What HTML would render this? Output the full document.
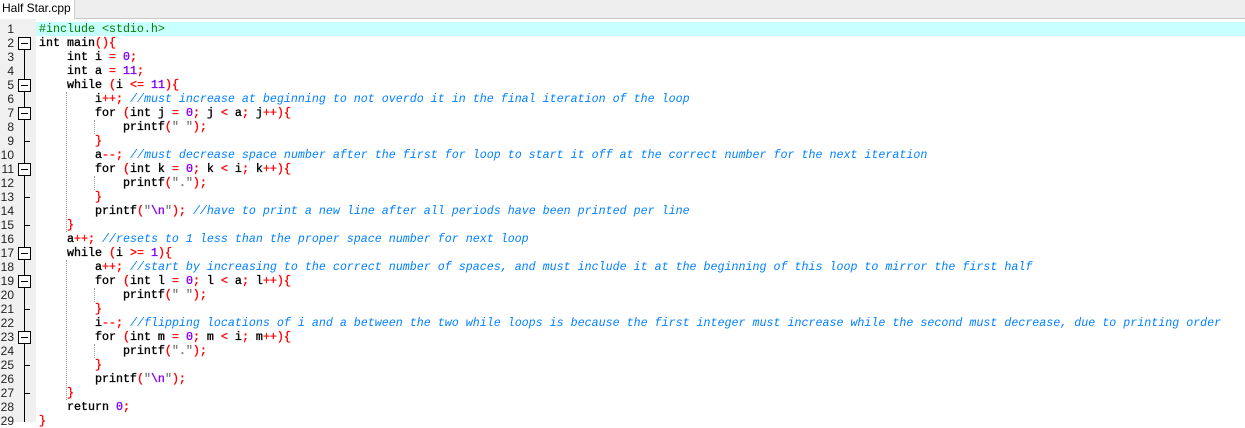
<!DOCTYPE html>
<html><head><meta charset="utf-8"><style>
html,body{margin:0;padding:0;}
body{width:1245px;height:422px;overflow:hidden;background:#fff;position:relative;font-family:"Liberation Mono",monospace;}
.tabbar{position:absolute;left:0;top:0;width:1245px;height:18px;background:#eeeeee;border-bottom:1px solid #c8c8c8;}
.tab{position:absolute;left:0;top:0;width:75px;height:19px;background:#fff;border-right:1px solid #d0d0d0;font-family:"Liberation Sans",sans-serif;font-size:12px;line-height:17px;padding-left:2px;box-sizing:border-box;color:#000;}
.gutter{position:absolute;left:0;top:19px;width:36px;height:403px;background:#f0f0f0;}
.hl{position:absolute;left:36px;top:22px;width:1209px;height:14px;background:#c8ffff;}
.ln{position:absolute;left:0;width:14px;text-align:right;font-family:"Liberation Sans",sans-serif;font-size:12px;line-height:14px;color:#222;}
.code{position:absolute;left:39px;white-space:pre;font-size:11.67px;line-height:14px;font-weight:normal;-webkit-text-stroke:0.35px currentColor;color:#000;}
.o{color:#ff0000}
.n{color:#8000ff}
.s{color:#808080}
.p{color:#008000;-webkit-text-stroke:0}
.c{color:#0080ff;font-style:italic;-webkit-text-stroke:0}
.vl{position:absolute;left:24px;width:1px;background:#000;}
.box{position:absolute;left:18px;width:11px;height:11px;border:1px solid #000;background:#fff;}
.box:after{content:"";position:absolute;left:2px;top:5px;width:7px;height:1px;background:#000;}
.tick{position:absolute;left:24px;width:6px;height:1px;background:#000;}
.g{position:absolute;width:0;border-left:1px dotted #999;}
</style></head><body>
<div class="tabbar"></div>
<div class="tab">Half Star.cpp</div>
<div class="gutter"></div>
<div class="hl"></div>

<div class="vl" style="top:44px;height:378px"></div>

<div class="box" style="top:37px"></div>
<div class="box" style="top:79px"></div>
<div class="box" style="top:107px"></div>
<div class="box" style="top:163px"></div>
<div class="box" style="top:247px"></div>
<div class="box" style="top:275px"></div>
<div class="box" style="top:331px"></div>
<div class="tick" style="top:141px"></div>
<div class="tick" style="top:197px"></div>
<div class="tick" style="top:225px"></div>
<div class="tick" style="top:309px"></div>
<div class="tick" style="top:365px"></div>
<div class="tick" style="top:393px"></div>

<div class="g" style="left:66px;top:92px;height:140px"></div>
<div class="g" style="left:66px;top:260px;height:140px"></div>
<div class="g" style="left:94px;top:120px;height:14px"></div>
<div class="g" style="left:94px;top:176px;height:14px"></div>
<div class="g" style="left:94px;top:288px;height:14px"></div>
<div class="g" style="left:94px;top:344px;height:14px"></div>

<div class="ln" style="top:22px">1</div>
<div class="ln" style="top:36px">2</div>
<div class="ln" style="top:50px">3</div>
<div class="ln" style="top:64px">4</div>
<div class="ln" style="top:78px">5</div>
<div class="ln" style="top:92px">6</div>
<div class="ln" style="top:106px">7</div>
<div class="ln" style="top:120px">8</div>
<div class="ln" style="top:134px">9</div>
<div class="ln" style="top:148px">10</div>
<div class="ln" style="top:162px">11</div>
<div class="ln" style="top:176px">12</div>
<div class="ln" style="top:190px">13</div>
<div class="ln" style="top:204px">14</div>
<div class="ln" style="top:218px">15</div>
<div class="ln" style="top:232px">16</div>
<div class="ln" style="top:246px">17</div>
<div class="ln" style="top:260px">18</div>
<div class="ln" style="top:274px">19</div>
<div class="ln" style="top:288px">20</div>
<div class="ln" style="top:302px">21</div>
<div class="ln" style="top:316px">22</div>
<div class="ln" style="top:330px">23</div>
<div class="ln" style="top:344px">24</div>
<div class="ln" style="top:358px">25</div>
<div class="ln" style="top:372px">26</div>
<div class="ln" style="top:386px">27</div>
<div class="ln" style="top:400px">28</div>
<div class="ln" style="top:414px">29</div>

<div class="code" style="top:22px"><span class="p">#include &lt;stdio.h&gt;</span></div>
<div class="code" style="top:36px">int main<span class="o">(){</span></div>
<div class="code" style="top:50px">    int i <span class="o">=</span> <span class="n">0</span><span class="o">;</span></div>
<div class="code" style="top:64px">    int a <span class="o">=</span> <span class="n">11</span><span class="o">;</span></div>
<div class="code" style="top:78px">    while <span class="o">(</span>i <span class="o">&lt;=</span> <span class="n">11</span><span class="o">){</span></div>
<div class="code" style="top:92px">        i<span class="o">++;</span> <span class="c">//must increase at beginning to not overdo it in the final iteration of the loop</span></div>
<div class="code" style="top:106px">        for <span class="o">(</span>int j <span class="o">=</span> <span class="n">0</span><span class="o">;</span> j <span class="o">&lt;</span> a<span class="o">;</span> j<span class="o">++){</span></div>
<div class="code" style="top:120px">            printf<span class="o">(</span><span class="s">" "</span><span class="o">);</span></div>
<div class="code" style="top:134px">        <span class="o">}</span></div>
<div class="code" style="top:148px">        a<span class="o">--;</span> <span class="c">//must decrease space number after the first for loop to start it off at the correct number for the next iteration</span></div>
<div class="code" style="top:162px">        for <span class="o">(</span>int k <span class="o">=</span> <span class="n">0</span><span class="o">;</span> k <span class="o">&lt;</span> i<span class="o">;</span> k<span class="o">++){</span></div>
<div class="code" style="top:176px">            printf<span class="o">(</span><span class="s">"."</span><span class="o">);</span></div>
<div class="code" style="top:190px">        <span class="o">}</span></div>
<div class="code" style="top:204px">        printf<span class="o">(</span><span class="s">"</span><span class="n">\n</span><span class="s">"</span><span class="o">);</span> <span class="c">//have to print a new line after all periods have been printed per line</span></div>
<div class="code" style="top:218px">    <span class="o">}</span></div>
<div class="code" style="top:232px">    a<span class="o">++;</span> <span class="c">//resets to 1 less than the proper space number for next loop</span></div>
<div class="code" style="top:246px">    while <span class="o">(</span>i <span class="o">&gt;=</span> <span class="n">1</span><span class="o">){</span></div>
<div class="code" style="top:260px">        a<span class="o">++;</span> <span class="c">//start by increasing to the correct number of spaces, and must include it at the beginning of this loop to mirror the first half</span></div>
<div class="code" style="top:274px">        for <span class="o">(</span>int l <span class="o">=</span> <span class="n">0</span><span class="o">;</span> l <span class="o">&lt;</span> a<span class="o">;</span> l<span class="o">++){</span></div>
<div class="code" style="top:288px">            printf<span class="o">(</span><span class="s">" "</span><span class="o">);</span></div>
<div class="code" style="top:302px">        <span class="o">}</span></div>
<div class="code" style="top:316px">        i<span class="o">--;</span> <span class="c">//flipping locations of i and a between the two while loops is because the first integer must increase while the second must decrease, due to printing order</span></div>
<div class="code" style="top:330px">        for <span class="o">(</span>int m <span class="o">=</span> <span class="n">0</span><span class="o">;</span> m <span class="o">&lt;</span> i<span class="o">;</span> m<span class="o">++){</span></div>
<div class="code" style="top:344px">            printf<span class="o">(</span><span class="s">"."</span><span class="o">);</span></div>
<div class="code" style="top:358px">        <span class="o">}</span></div>
<div class="code" style="top:372px">        printf<span class="o">(</span><span class="s">"</span><span class="n">\n</span><span class="s">"</span><span class="o">);</span></div>
<div class="code" style="top:386px">    <span class="o">}</span></div>
<div class="code" style="top:400px">    return <span class="n">0</span><span class="o">;</span></div>
<div class="code" style="top:414px"><span class="o">}</span></div>
</body></html>
